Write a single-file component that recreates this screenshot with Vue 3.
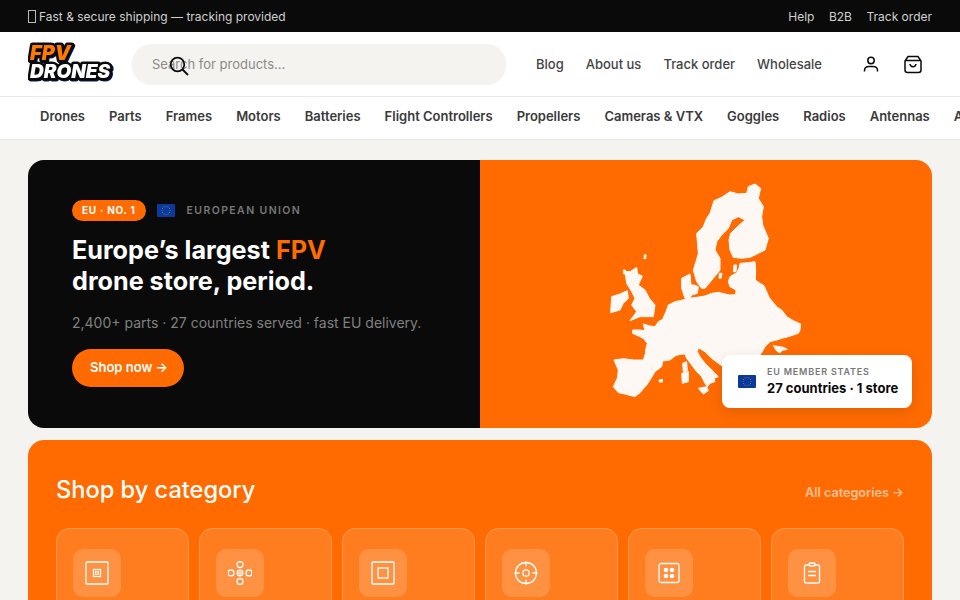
<script setup>
const topLinks = ["Help", "B2B", "Track order"];
const headLinks = ["Blog", "About us", "Track order", "Wholesale"];
const navLinks = [
  "Drones",
  "Parts",
  "Frames",
  "Motors",
  "Batteries",
  "Flight Controllers",
  "Propellers",
  "Cameras & VTX",
  "Goggles",
  "Radios",
  "Antennas",
  "Accessories",
];
const categories = ["frame", "drone", "square", "target", "grid", "clipboard"];

// ring of stars on the flag
const stars = Array.from({ length: 12 }, (_, i) => ({
  x: 9 + 4 * Math.cos((i * Math.PI) / 6),
  y: 6.5 + 4 * Math.sin((i * Math.PI) / 6),
}));
</script>

<template>
  <div class="page">
    <div class="topbar">
      <span class="topbar-note"><i class="tofu"></i>Fast &amp; secure shipping — tracking provided</span>
      <div class="topbar-links">
        <a v-for="link in topLinks" :key="link">{{ link }}</a>
      </div>
    </div>

    <header class="header">
      <svg class="logo" width="96" height="52" viewBox="0 0 96 52">
        <text x="2" y="22" class="logo-fpv">FPV</text>
        <text x="2" y="40" class="logo-drones">DRONES</text>
      </svg>
      <div class="search">
        <span class="search-text">Search for products...</span>
        <svg class="search-icon" width="22" height="22" viewBox="0 0 22 22">
          <circle cx="9.5" cy="9.5" r="6.8" />
          <path d="M14.5 14.5 20 20" />
        </svg>
      </div>
      <nav class="head-links">
        <a v-for="link in headLinks" :key="link">{{ link }}</a>
      </nav>
      <div class="head-icons">
        <svg width="20" height="20" viewBox="0 0 20 20">
          <circle cx="10" cy="6.500" r="3.200" />
          <path d="M3.500 17.500v-1C3.500 14 5.300 12.500 8 12.500h4c2.700 0 4.500 1.500 4.500 4v1" />
        </svg>
        <svg width="20" height="20" viewBox="0 0 20 20">
          <path d="M5 2.500h10L18 7v9c0 1.400-1 2.500-2.500 2.500h-11C3 18.500 2 17.400 2 16V7z" />
          <path d="M2.500 6.500h15" />
          <path d="M7 10c.3 2 1.400 2.800 3 2.800s2.700-.8 3-2.800" />
        </svg>
      </div>
    </header>

    <nav class="catnav">
      <a v-for="link in navLinks" :key="link">{{ link }}</a>
    </nav>

    <main class="main">
      <section class="hero">
        <div class="hero-left">
          <div class="hero-tags">
            <span class="pill">EU · NO. 1</span>
            <svg class="flag" width="18" height="13" viewBox="0 0 18 13">
              <rect width="18" height="13" rx="1" fill="#0b3a9c" />
              <circle v-for="(s, i) in stars" :key="i" :cx="s.x" :cy="s.y" r="0.45" fill="#c9a93a" />
            </svg>
            <span class="tag-text">EUROPEAN UNION</span>
          </div>
          <h1>Europe’s largest <em>FPV</em><br />drone store, period.</h1>
          <p>2,400+ parts · 27 countries served · fast EU delivery.</p>
          <a class="shop-btn">Shop now →</a>
        </div>
        <div class="hero-right">
          <svg class="map" width="240" height="240" viewBox="0 0 720 720">
            <!-- mainland -->
            <path d="M72 570L100 566L130 570L160 570L166 552L168 535L172 520L160 505L128 490L128 480L150 480L165 482L160 462L180 468L195 470L205 455L218 448L228 425L235 405L255 395L270 392L285 388L300 385L320 382L345 378L365 370L385 367L405 372L420 375L437 374L438 360L420 350L415 335L420 320L440 308L447 295L450 280L475 278L495 275L497 300L496 330L510 340L522 347L530 365L537 382L550 398L562 412L575 420L590 440L610 452L632 462L630 480L625 490L595 500L575 505L560 510L540 515L525 530L515 548L505 560L400 560L400 590L385 580L365 565L345 545L325 533L322 545L330 560L345 580L365 600L385 620L372 625L375 635L360 640L352 650L345 640L335 620L320 605L305 585L290 565L285 552L270 553L255 558L240 570L218 573L215 590L195 605L180 630L170 645L150 668L135 680L105 672L85 668L70 650L82 625L85 600Z" />
            <!-- scandinavia and finland -->
            <path d="M335 355L320 335L310 300L318 275L325 250L322 215L320 190L340 170L350 145L360 130L372 92L395 82L420 65L445 72L470 70L475 50L495 42L512 55L505 85L520 110L515 140L518 165L535 205L525 240L505 250L480 262L455 265L430 262L420 240L417 210L422 190L440 172L465 150L445 140L425 150L415 175L395 195L380 215L375 240L390 265L390 300L370 325L345 355Z" />
            <!-- denmark -->
            <path d="M275 325L300 312L303 345L312 345L325 350L322 370L305 375L300 385L285 385L275 355Z" />
            <!-- britain -->
            <path d="M105 305L120 305L140 292L143 312L157 318L145 345L165 360L178 385L195 405L190 440L150 440L120 452L140 425L125 405L135 385L125 365L110 340Z" />
            <!-- ireland -->
            <path d="M65 380L90 372L112 362L115 385L100 400L90 420L62 428Z" />
            <!-- islands -->
            <path d="M278 580L290 575L292 603L280 605ZM275 610L295 605L295 635L277 640ZM325 655L350 650L355 662L340 672ZM207 630L217 628L218 636L208 636ZM163 254L168 254L167 266L162 266ZM100 300L106 300L107 312L101 312ZM432 285L440 285L438 305L430 305ZM388 310L396 310L393 325L387 325ZM550 527L580 532L592 538L577 541L570 549L560 543Z" />
          </svg>
          <div class="map-card">
            <svg class="flag" width="18" height="13" viewBox="0 0 18 13">
              <rect width="18" height="13" rx="1" fill="#0b3a9c" />
              <circle v-for="(s, i) in stars" :key="i" :cx="s.x" :cy="s.y" r="0.45" fill="#c9a93a" />
            </svg>
            <div>
              <div class="map-card-label">EU MEMBER STATES</div>
              <div class="map-card-value">27 countries · 1 store</div>
            </div>
          </div>
        </div>
      </section>

      <section class="categories">
        <div class="cat-head">
          <h2>Shop by category</h2>
          <a>All categories →</a>
        </div>
        <div class="cat-grid">
          <div v-for="c in categories" :key="c" class="cat-card">
            <div class="cat-icon">
              <svg width="24" height="24" viewBox="0 0 24 24">
                <template v-if="c === 'frame'">
                  <rect x="1" y="1" width="22" height="22" rx="1" />
                  <rect x="8.500" y="8.500" width="7" height="7" />
                  <rect x="10.500" y="10.500" width="3" height="3" class="inner" />
                </template>
                <template v-else-if="c === 'drone'">
                  <circle cx="12" cy="12" r="2.800" />
                  <circle cx="12" cy="3.500" r="3" />
                  <circle cx="12" cy="20.500" r="3" />
                  <circle cx="3" cy="12" r="3" />
                  <circle cx="21" cy="12" r="3" />
                  <circle cx="12" cy="12" r="1.300" class="inner" />
                </template>
                <template v-else-if="c === 'square'">
                  <rect x="1" y="1" width="22" height="22" rx="1" />
                  <rect x="7" y="7" width="10" height="10" />
                </template>
                <template v-else-if="c === 'target'">
                  <circle cx="12" cy="12" r="10.500" />
                  <circle cx="12" cy="12" r="3.200" />
                  <path d="M12 0.500v5M12 18.500v5M0.500 12h5M18.500 12h5" />
                </template>
                <template v-else-if="c === 'grid'">
                  <rect x="2" y="2.500" width="20" height="19" rx="2" />
                  <g class="dots">
                    <circle cx="9" cy="9" r="2.300" />
                    <circle cx="15" cy="9" r="2.300" />
                    <circle cx="9" cy="15" r="2.300" />
                    <circle cx="15" cy="15" r="2.300" />
                  </g>
                </template>
                <template v-else>
                  <rect x="4.500" y="4" width="15" height="18" rx="1.500" />
                  <rect x="9" y="2" width="6" height="3" rx="1" class="clip" />
                  <path d="M8 10.500h8M8 14.500h8" />
                </template>
              </svg>
            </div>
          </div>
        </div>
      </section>
    </main>
  </div>
</template>

<style scoped>
.page {
  height: 100vh;
  overflow: hidden;
  background: #f5f3ef;
  font-family: Inter, "Liberation Sans", sans-serif;
  color: #0a0a0a;
}

.topbar {
  height: 32px;
  padding: 0 28px;
  display: flex;
  align-items: center;
  justify-content: space-between;
  background: #0a0a0a;
  color: #d0d0d0;
  font-size: 12px;
}

.topbar-note {
  display: flex;
  align-items: center;
}

.tofu {
  width: 6px;
  height: 11px;
  margin-right: 3px;
  border: 1px solid #bbb;
}

.topbar-links {
  display: flex;
  gap: 14.500px;
}

.header {
  height: 64px;
  padding: 0 28px;
  display: flex;
  align-items: center;
  background: #fff;
  border-bottom: 1px solid #e9e9e7;
  box-sizing: content-box;
}

.logo {
  flex: none;
  margin-right: 8px;
  font-family: Inter, sans-serif;
  font-style: italic;
  font-weight: 900;
}

.logo text {
  stroke: #0a0a0a;
  stroke-width: 5px;
  stroke-linejoin: round;
  paint-order: stroke;
  filter: drop-shadow(1px 1px 0 #0b1450);
}

.logo .logo-fpv {
  font-size: 20px;
  fill: #ff7a00;
}

.logo .logo-drones {
  font-size: 19px;
  fill: #fff;
}

.search {
  position: relative;
  width: 374px;
  height: 40px;
  flex: none;
  display: flex;
  align-items: center;
  padding-left: 20px;
  box-sizing: border-box;
  border-radius: 20px;
  background: #f5f3ef;
  box-shadow: 0 1px 2px rgba(0, 0, 0, 0.06);
  font-size: 13px;
  color: #8a8a8a;
}

.search-icon {
  position: absolute;
  left: 36px;
  top: 11px;
  fill: none;
  stroke: #0a0a0a;
  stroke-width: 1.800;
}

.head-links {
  display: flex;
  gap: 22px;
  margin: -1px 0 0 30px;
  font-size: 13px;
  font-weight: 500;
  color: #444;
}

.head-icons {
  margin-left: auto;
  margin-right: 9px;
  display: flex;
  gap: 22px;
}

.head-icons svg {
  fill: none;
  stroke: #0a0a0a;
  stroke-width: 1.500;
}

.catnav {
  height: 43px;
  padding: 0 40px 4px;
  box-sizing: border-box;
  display: flex;
  align-items: center;
  gap: 24px;
  overflow: hidden;
  white-space: nowrap;
  background: #fff;
  border-bottom: 1px solid #e9e9e7;
  font-size: 13px;
  font-weight: 600;
  color: #3a3a3a;
}

.main {
  padding: 20px 28px 0;
  display: flex;
  flex-direction: column;
  gap: 12px;
}

.hero {
  height: 268px;
  display: flex;
  border-radius: 16px;
  overflow: hidden;
}

.hero-left {
  width: 452px;
  flex: none;
  padding: 40px 0 0 44px;
  box-sizing: border-box;
  background: #0a0a0a;
}

.hero-tags {
  display: flex;
  align-items: center;
  height: 21px;
}

.pill {
  padding: 0 10px;
  height: 21px;
  line-height: 21px;
  border-radius: 11px;
  background: #ff6b00;
  color: #fff;
  font-size: 10px;
  font-weight: 700;
  letter-spacing: 0.75px;
}

.hero-tags .flag {
  margin: 0 12px 0 11px;
}

.tag-text {
  color: #777;
  font-size: 10.500px;
  font-weight: 600;
  letter-spacing: 1.400px;
}

h1 {
  margin: 14px 0 0;
  font-size: 25.200px;
  line-height: 30.500px;
  font-weight: 700;
  color: #fff;
}

h1 em {
  font-style: normal;
  color: #ff6b00;
}

.hero-left p {
  margin: 17px 0 0;
  font-size: 14px;
  line-height: 20px;
  color: #808080;
}

.shop-btn {
  display: inline-block;
  margin-top: 16px;
  padding: 0 16px 0 18px;
  height: 38px;
  line-height: 37px;
  border-radius: 19px;
  background: #ff6b00;
  color: #fff;
  font-size: 13px;
  font-weight: 600;
}

.hero-right {
  position: relative;
  flex: 1;
  display: flex;
  align-items: center;
  justify-content: center;
  padding: 0 0 8px 8px;
  background: #ff6b00;
}

.map {
  fill: #fdf8f4;
  stroke: #fdf8f4;
  stroke-width: 3px;
  stroke-linejoin: round;
}

.map-card {
  position: absolute;
  right: 20px;
  bottom: 20px;
  width: 190px;
  height: 53px;
  box-sizing: border-box;
  padding: 0 0 3px 16px;
  display: flex;
  align-items: center;
  gap: 11px;
  border-radius: 8px;
  background: #fff;
  box-shadow: 0 4px 14px rgba(0, 0, 0, 0.12);
}

.map-card .flag {
  margin-top: 3px;
}

.map-card-label {
  font-size: 9px;
  line-height: 13px;
  font-weight: 600;
  letter-spacing: 0.8px;
  color: #777;
}

.map-card-value {
  margin-top: 2px;
  font-size: 13px;
  line-height: 16px;
  font-weight: 700;
}

.categories {
  height: 400px;
  padding: 35px 28px 0;
  box-sizing: border-box;
  border-radius: 16px;
  background: #ff6b00;
}

.cat-head {
  display: flex;
  align-items: center;
  justify-content: space-between;
  height: 28px;
  color: #fff;
}

h2 {
  margin: 0;
  font-size: 23.600px;
  font-weight: 500;
}

.cat-head a {
  margin-top: 7px;
  font-size: 12.600px;
  font-weight: 600;
  color: rgba(255, 255, 255, 0.6);
}

.cat-grid {
  margin-top: 25px;
  display: grid;
  grid-template-columns: repeat(6, 1fr);
  gap: 10px;
}

.cat-card {
  height: 140px;
  padding: 20px 16px;
  box-sizing: border-box;
  border: 1px solid rgba(255, 255, 255, 0.2);
  border-radius: 14px;
  background: rgba(255, 255, 255, 0.12);
}

.cat-icon {
  width: 48px;
  height: 48px;
  display: flex;
  align-items: center;
  justify-content: center;
  border-radius: 10px;
  background: rgba(255, 255, 255, 0.16);
}

.cat-icon svg {
  fill: none;
  stroke: #fff;
  stroke-width: 1.300;
}

.cat-icon .dots {
  fill: #fff;
  stroke: none;
}

.cat-icon .inner {
  fill: rgba(255, 255, 255, 0.4);
  stroke-width: 0.8;
}

.cat-icon .clip {
  fill: #ff944d;
}
</style>
